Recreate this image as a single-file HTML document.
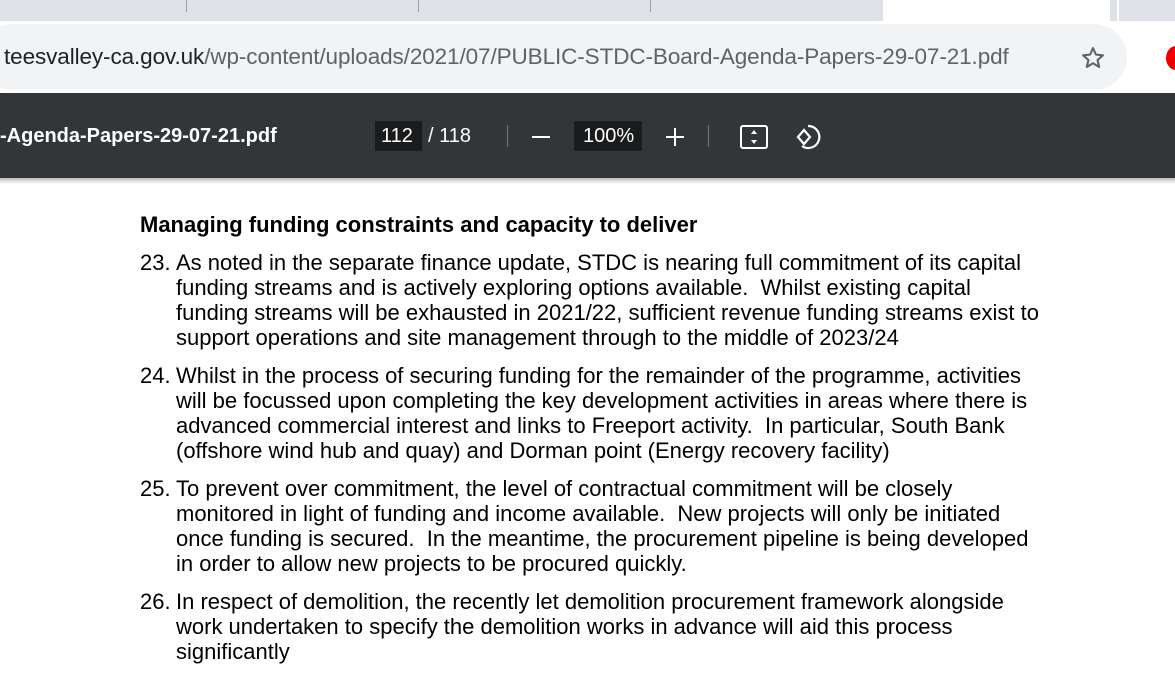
<!DOCTYPE html>
<html><head><meta charset="utf-8"><style>
*{margin:0;padding:0;box-sizing:border-box}
body{width:1175px;height:698px;overflow:hidden;background:#fff;font-family:"Liberation Sans",Arial,sans-serif;position:relative}
.tabs{position:absolute;left:0;top:0;width:1175px;height:21px;background:#dee1e6}
.tabs .sep{position:absolute;top:0;width:1px;height:12px;background:#9aa0a6}
.active{position:absolute;left:883px;top:0;width:227px;height:21px;background:#fff}
.bar{position:absolute;left:0;top:21px;width:1175px;height:72px;background:#fff}
.omni{position:absolute;left:-20px;top:24px;width:1147px;height:66px;background:#f1f3f4;border-radius:33px}
.url{position:absolute;left:4px;top:44px;font-size:22.5px;color:#5f6368;white-space:nowrap;letter-spacing:-0.1px}
.url b{font-weight:normal;color:#202124}
.tool{position:absolute;left:0;top:93px;width:1175px;height:85px;background:#323639;color:#fff}
.shadow{position:absolute;left:0;top:178px;width:1175px;height:6px;background:linear-gradient(#bbb,#fff)}
.doc{position:absolute;left:140px;top:212px;font-size:22px;color:#000;white-space:nowrap}
.doc h3{font-size:22px;font-weight:bold;height:38px;line-height:26px}
.p{position:relative;padding-left:36px;line-height:25px;margin-bottom:13px}
.p .n{position:absolute;left:0;top:0}
</style></head><body>
<div class="tabs">
<div class="sep" style="left:186px"></div><div class="sep" style="left:418px"></div><div class="sep" style="left:650px"></div>
<div class="active"></div>
<div style="position:absolute;left:1117px;top:0;width:70px;height:21px;background:#dee1e6;border-left:2px solid #fff"></div>
</div>
<div class="bar"></div>
<div class="omni"></div>
<div class="url"><b>teesvalley-ca.gov.uk</b>/wp-content/uploads/2021/07/PUBLIC-STDC-Board-Agenda-Papers-29-07-21.pdf</div>
<svg style="position:absolute;left:1079px;top:44px" width="28" height="28" viewBox="0 0 24 24"><path d="M12 3.5l2.5 5.6 6 .6-4.6 4 1.4 6-5.3-3.2-5.3 3.2 1.4-6-4.6-4 6-.6z" fill="none" stroke="#5f6368" stroke-width="1.8" stroke-linejoin="round"/></svg>
<div style="position:absolute;left:1166px;top:46px;width:20px;height:24px;border-radius:50%;background:#e00"></div>
<div class="tool">
<div style="position:absolute;left:0;top:32px;font-size:20px;font-weight:bold">-Agenda-Papers-29-07-21.pdf</div>
<div style="position:absolute;left:375px;top:28px;width:47px;height:30px;background:#191b1c"></div>
<div style="position:absolute;left:381px;top:32px;font-size:20px">112</div>
<div style="position:absolute;left:428px;top:32px;font-size:20px">/ 118</div>
<div style="position:absolute;left:507px;top:32px;width:1px;height:22px;background:#777"></div>
<div style="position:absolute;left:532px;top:43px;width:18px;height:2px;background:#fff"></div>
<div style="position:absolute;left:574px;top:28px;width:68px;height:30px;background:#191b1c"></div>
<div style="position:absolute;left:583px;top:32px;font-size:20px">100%</div>
<div style="position:absolute;left:666px;top:43px;width:18px;height:2px;background:#fff"></div>
<div style="position:absolute;left:674px;top:35px;width:2px;height:18px;background:#fff"></div>
<div style="position:absolute;left:708px;top:32px;width:1px;height:22px;background:#777"></div>
<svg style="position:absolute;left:739px;top:31px" width="30" height="26" viewBox="0 0 30 26"><rect x="2" y="2" width="26" height="22" rx="2" fill="none" stroke="#fff" stroke-width="2"/><path d="M15 6l-3 4h6z M15 20l-3-4h6z" fill="#fff"/></svg>
<svg style="position:absolute;left:793px;top:29px" width="30" height="30" viewBox="0 0 30 30"><path d="M15 4a11 11 0 1 1-6 20" fill="none" stroke="#fff" stroke-width="2.2"/><path d="M11 8l-6 7 6 7 6-7z" fill="none" stroke="#fff" stroke-width="2.2"/></svg>
</div>
<div class="shadow"></div>
<div class="doc">
<h3>Managing funding constraints and capacity to deliver</h3>
<div class="p"><span class="n">23.</span>As noted in the separate finance update, STDC is nearing full commitment of its capital<br>funding streams and is actively exploring options available.&nbsp; Whilst existing capital<br>funding streams will be exhausted in 2021/22, sufficient revenue funding streams exist to<br>support operations and site management through to the middle of 2023/24</div>
<div class="p"><span class="n">24.</span>Whilst in the process of securing funding for the remainder of the programme, activities<br>will be focussed upon completing the key development activities in areas where there is<br>advanced commercial interest and links to Freeport activity.&nbsp; In particular, South Bank<br>(offshore wind hub and quay) and Dorman point (Energy recovery facility)</div>
<div class="p"><span class="n">25.</span>To prevent over commitment, the level of contractual commitment will be closely<br>monitored in light of funding and income available.&nbsp; New projects will only be initiated<br>once funding is secured.&nbsp; In the meantime, the procurement pipeline is being developed<br>in order to allow new projects to be procured quickly.</div>
<div class="p"><span class="n">26.</span>In respect of demolition, the recently let demolition procurement framework alongside<br>work undertaken to specify the demolition works in advance will aid this process<br>significantly</div>
</div>
</body></html>
